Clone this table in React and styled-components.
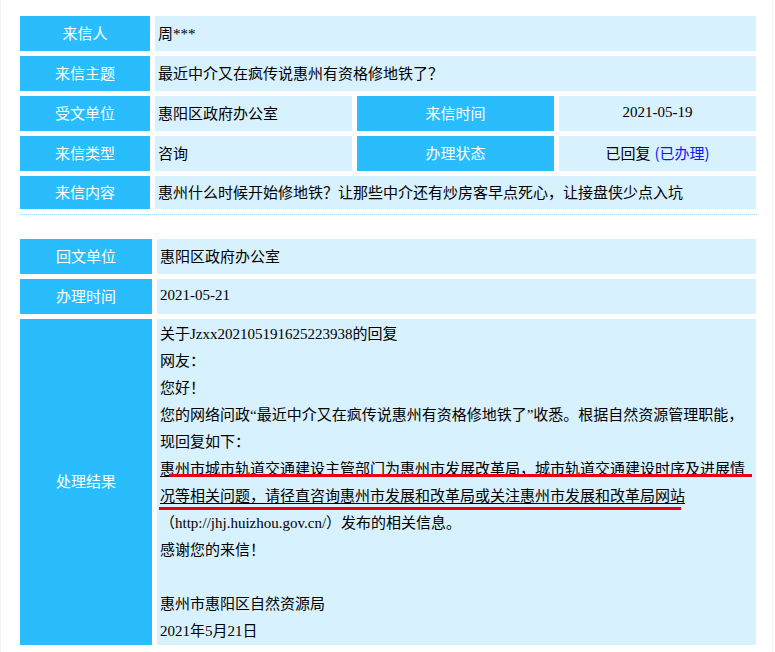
import React from "react";
import styled, { createGlobalStyle } from "styled-components";

const GlobalStyle = createGlobalStyle`
  body {
    margin: 0;
    background: #ffffff;
    font-family: "Liberation Serif", "Noto Sans CJK SC", serif;
    font-size: 15px;
    color: #000;
  }
`;

const letter = [
  { label: "来信人", value: "周***" },
  { label: "来信主题", value: "最近中介又在疯传说惠州有资格修地铁了？" },
];

const replyLines = [
  { text: "关于Jzxx202105191625223938的回复" },
  { text: "网友：" },
  { text: "您好！" },
  { text: "您的网络问政“最近中介又在疯传说惠州有资格修地铁了”收悉。根据自然资源管理职能，" },
  { text: "现回复如下：" },
  { text: "惠州市城市轨道交通建设主管部门为惠州市发展改革局，城市轨道交通建设时序及进展情", marked: true },
  { text: "况等相关问题，请径直咨询惠州市发展和改革局或关注惠州市发展和改革局网站", marked: true },
  { text: "（http://jhj.huizhou.gov.cn/）发布的相关信息。" },
  { text: "感谢您的来信！" },
  { text: "" },
  { text: "惠州市惠阳区自然资源局" },
  { text: "2021年5月21日" },
];

const App = () => {
  return (
    <>
      <GlobalStyle />
      <Page>
        <InfoGrid>
          {letter.map((row) => (
            <React.Fragment key={row.label}>
              <Label>{row.label}</Label>
              <Value $span={3}>{row.value}</Value>
            </React.Fragment>
          ))}

          <Label>受文单位</Label>
          <Value>惠阳区政府办公室</Value>
          <Label>来信时间</Label>
          <Value $center>2021-05-19</Value>

          <Label>来信类型</Label>
          <Value>咨询</Value>
          <Label>办理状态</Label>
          <Value $center>
            已回复 <StatusLink>(已办理)</StatusLink>
          </Value>

          <Label $h={33}>来信内容</Label>
          <Value $span={3} $h={33}>
            惠州什么时候开始修地铁？让那些中介还有炒房客早点死心，让接盘侠少点入坑
          </Value>
        </InfoGrid>

        <Divider />

        <ReplyGrid>
          <Label>回文单位</Label>
          <Value>惠阳区政府办公室</Value>

          <Label>办理时间</Label>
          <Value>2021-05-21</Value>

          <Label $h={326}>处理结果</Label>
          <ReplyBody>
            {replyLines.map((line, i) => (
              <ReplyLine key={i} $marked={line.marked}>
                {line.text || "\u00a0"}
              </ReplyLine>
            ))}
            <Mark $left={12} $top={155} $width={583} />
            <Mark $left={2} $top={188} $width={522} />
          </ReplyBody>
        </ReplyGrid>
      </Page>
    </>
  );
};

const Page = styled.div`
  box-sizing: border-box;
  width: 773px;
  min-height: 652px;
  padding-top: 16px;
  border-left: 1px solid #f3f3f3;
  border-right: 1px solid #f3f3f3;
`;

const InfoGrid = styled.div`
  display: grid;
  grid-template-columns: 130px 197px 197px 197px;
  gap: 5px;
  margin-left: 19px;
`;

const ReplyGrid = styled.div`
  display: grid;
  grid-template-columns: 132px 599px;
  gap: 5px;
  margin: 24px 0 0 19px;
`;

const Label = styled.div`
  box-sizing: border-box;
  height: ${(p) => p.$h || 35}px;
  display: flex;
  align-items: center;
  justify-content: center;
  padding-bottom: 3px;
  background: #2abdfd;
  color: #ffffff;
  font-family: "Noto Sans CJK SC", sans-serif;
  font-size: 15px;
`;

const Value = styled.div`
  grid-column: span ${(p) => p.$span || 1};
  height: ${(p) => p.$h || 35}px;
  display: flex;
  align-items: center;
  justify-content: ${(p) => (p.$center ? "center" : "flex-start")};
  padding: 0 3px 3px;
  background: #d8f1fe;
  white-space: nowrap;
  box-sizing: border-box;
`;

const StatusLink = styled.span`
  color: #1414ff;
  margin-left: 4px;
  font-family: "Noto Sans CJK SC", sans-serif;
`;

const Divider = styled.div`
  width: 737px;
  margin: 5px 0 0 19px;
  border-top: 1px dotted #9fd9f7;
`;

const ReplyBody = styled.div`
  position: relative;
  box-sizing: border-box;
  height: 326px;
  padding: 2px 3px 0;
  background: #d8f1fe;
  line-height: 27px;
`;

const ReplyLine = styled.div`
  white-space: nowrap;
  text-decoration: ${(p) => (p.$marked ? "underline" : "none")};
  text-underline-offset: 2px;
`;

const Mark = styled.span`
  position: absolute;
  left: ${(p) => p.$left}px;
  top: ${(p) => p.$top}px;
  width: ${(p) => p.$width}px;
  height: 3px;
  background: #e60012;
`;

export default App;
